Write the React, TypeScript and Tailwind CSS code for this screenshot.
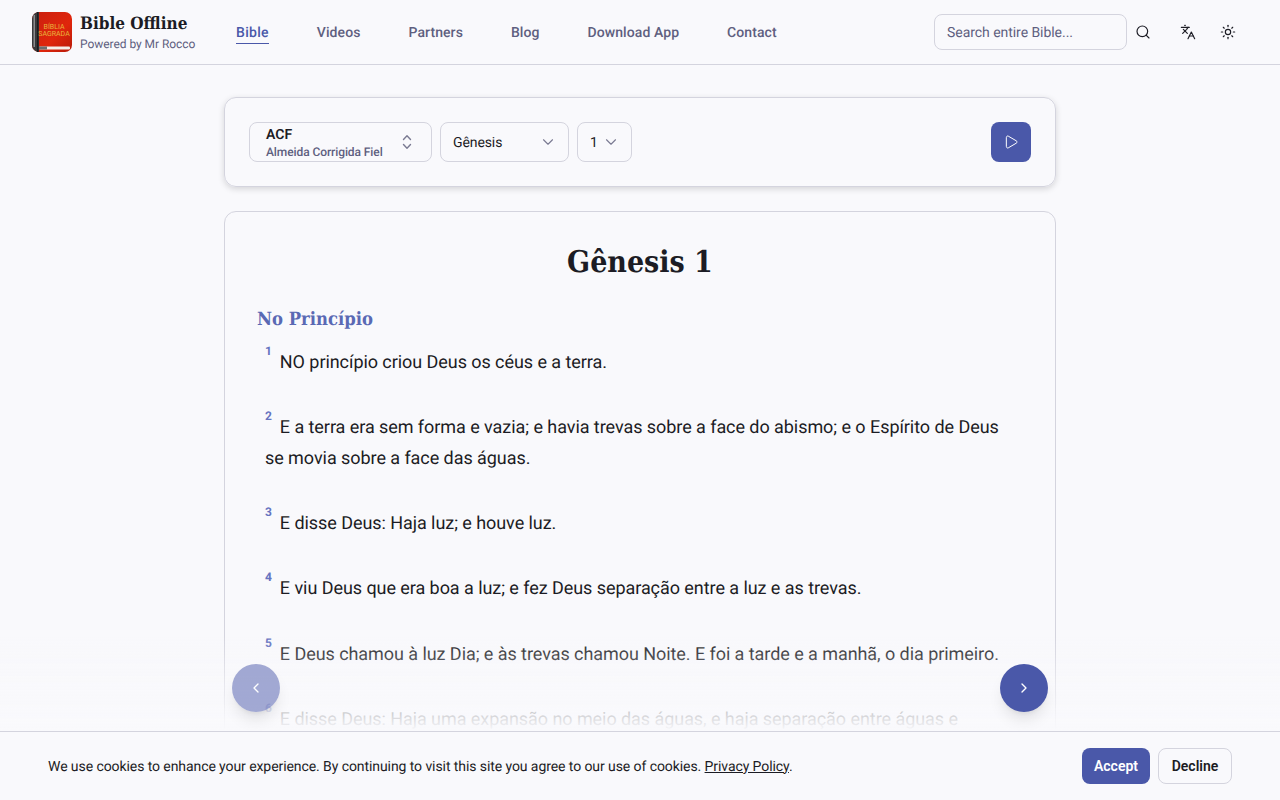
import { ChevronDown, ChevronLeft, ChevronRight, Languages, Play, Search, Sun } from 'lucide-react'

const navLinks = ['Videos', 'Partners', 'Blog', 'Download App', 'Contact']

const verses = [
  { n: 1, text: 'NO princípio criou Deus os céus e a terra.' },
  { n: 2, text: 'E a terra era sem forma e vazia; e havia trevas sobre a face do abismo; e o Espírito de Deus se movia sobre a face das águas.' },
  { n: 3, text: 'E disse Deus: Haja luz; e houve luz.' },
  { n: 4, text: 'E viu Deus que era boa a luz; e fez Deus separação entre a luz e as trevas.' },
  { n: 5, text: 'E Deus chamou à luz Dia; e às trevas chamou Noite. E foi a tarde e a manhã, o dia primeiro.' },
  { n: 6, text: 'E disse Deus: Haja uma expansão no meio das águas, e haja separação entre águas e águas.' },
]

function Logo() {
  return (
    <svg width="40" height="40" viewBox="0 0 40 40" className="shrink-0">
      <defs>
        <linearGradient id="cover" x1="0" y1="0" x2="1" y2="1">
          <stop offset="0" stopColor="#c9200f" />
          <stop offset="0.6" stopColor="#e0260c" />
          <stop offset="1" stopColor="#b81a08" />
        </linearGradient>
      </defs>
      <rect width="40" height="40" rx="7" fill="url(#cover)" />
      <path d="M0 7a7 7 0 0 1 7-7v40a7 7 0 0 1-7-7z" fill="#3a3a3c" />
      <rect x="1.5" y="3" width="1.5" height="32" fill="#8b8b8d" />
      <rect x="5" y="0" width="1.5" height="40" fill="#1d1d1f" />
      <rect x="7" y="34.5" width="31" height="3" rx="1" fill="#f4efe9" />
      <rect x="7" y="34.5" width="8" height="3" fill="#6d6d6d" />
      <text x="22" y="17" textAnchor="middle" fontSize="7" fill="#e9b43c" fontFamily="Roboto, sans-serif">BÍBLIA</text>
      <text x="22" y="23.5" textAnchor="middle" fontSize="7" fill="#e9b43c" fontFamily="Roboto, sans-serif">SAGRADA</text>
    </svg>
  )
}

function UpDownIcon() {
  return (
    <svg width="16" height="16" viewBox="0 0 16 16" fill="none" stroke="#7a7a92" strokeWidth="1.4" strokeLinecap="round" strokeLinejoin="round">
      <path d="M4.5 5.5 8 1.8 11.5 5.5M4.5 10.5 8 14.2 11.5 10.5" />
    </svg>
  )
}

export default function App() {
  return (
    <div className="h-screen overflow-hidden bg-[#f9f9fc] text-[#1c1c24] font-['Roboto',sans-serif] [text-rendering:geometricPrecision]">
      {/* Header */}
      <header className="h-[65px] border-b border-[#d4d4de] px-8 flex items-center">
        <div className="w-[164px] shrink-0 flex items-center gap-2">
          <Logo />
          <div>
            <div className="font-['DejaVu_Serif_Condensed','DejaVu_Serif',serif] font-bold text-[17px] leading-[22px]">Bible Offline</div>
            <div className="text-xs leading-4 text-[#5f5f80] tracking-[-0.05px] mt-px">Powered by Mr Rocco</div>
          </div>
        </div>

        <nav className="ml-10 flex items-center gap-12 text-sm font-medium text-[#5f5f80] tracking-[0.08px] pt-px">
          <a className="text-[#4a58a9] border-b border-[#4a58a9] leading-[20px] tracking-[0.3px] pt-px">Bible</a>
          {navLinks.map((link) => (
            <a key={link} className="leading-[20px]">{link}</a>
          ))}
        </nav>

        <div className="ml-auto flex items-center">
          <div className="w-[193px] h-9 rounded-lg border border-[#d4d4de] px-3 pt-px flex items-center text-sm text-[#5f5f80] tracking-[-0.05px]">
            Search entire Bible...
          </div>
          <Search className="w-4 h-4 ml-2" strokeWidth={1.75} />
          <Languages className="w-4 h-4 ml-[29px]" strokeWidth={1.75} />
          <Sun className="w-4 h-4 ml-6 mr-3" strokeWidth={1.75} />
        </div>
      </header>

      <main className="w-[832px] mx-auto pt-8">
        {/* Version selectors */}
        <div className="h-[90px] rounded-xl border border-[#d4d4de] shadow-[0_2px_6px_rgba(0,0,0,0.15)] px-6 flex items-center">
          <div className="w-[183px] h-10 rounded-lg border border-[#d4d4de] pl-4 pr-4 flex items-center justify-between">
            <div>
              <div className="text-sm font-semibold leading-[20px] pt-px">ACF</div>
              <div className="text-xs leading-[16px] font-medium text-[#5f5f80] tracking-[-0.09px] -mt-px">Almeida Corrigida Fiel</div>
            </div>
            <UpDownIcon />
          </div>
          <div className="ml-2 w-[129px] h-10 rounded-lg border border-[#d4d4de] pl-3 pr-[11px] flex items-center justify-between text-sm tracking-[-0.1px]">
            <span className="pt-px">Gênesis</span>
            <ChevronDown className="w-[18px] h-[18px] text-[#7a7a92]" strokeWidth={1.5} />
          </div>
          <div className="ml-2 w-[55px] h-10 rounded-lg border border-[#d4d4de] pl-3 pr-[11px] flex items-center justify-between text-sm">
            <span className="pt-px">1</span>
            <ChevronDown className="w-[18px] h-[18px] text-[#7a7a92]" strokeWidth={1.5} />
          </div>
          <button className="ml-auto w-10 h-10 rounded-lg bg-[#4a58a9] flex items-center justify-center text-white">
            <Play className="w-4 h-4" strokeWidth={1.5} />
          </button>
        </div>

        {/* Chapter */}
        <article className="mt-6 rounded-xl border border-[#d4d4de] p-8 pt-[27px]">
          <h1 className="font-['DejaVu_Serif_Condensed','DejaVu_Serif',serif] font-bold text-[30px] leading-[48px] text-center">Gênesis 1</h1>
          <h2 className="mt-[19px] font-['DejaVu_Serif_Condensed','DejaVu_Serif',serif] font-bold text-[18.3px] leading-[28px] text-[#5a69b4]">No Princípio</h2>
          <div className="mt-[14px] pl-2 pr-3">
            {verses.map((v) => (
              <p key={v.n} className="mb-[34.7px] text-[18px] leading-[30.6px] tracking-[-0.06px]">
                <sup className="text-xs font-bold text-[#6673c0] mr-2 top-[-13px]">{v.n}</sup>
                {v.text}
              </p>
            ))}
          </div>
        </article>
      </main>

      {/* Fade over the text */}
      <div className="fixed left-0 right-0 bottom-[69px] h-24 bg-gradient-to-t from-[#f9f9fc] to-transparent" />

      {/* Prev / next */}
      <button className="fixed left-[232px] top-[664px] w-12 h-12 rounded-full bg-[#4a58a9]/50 shadow-lg flex items-center justify-center text-white">
        <ChevronLeft className="w-4 h-4" />
      </button>
      <button className="fixed left-[1000px] top-[664px] w-12 h-12 rounded-full bg-[#4a58a9] shadow-lg flex items-center justify-center text-white">
        <ChevronRight className="w-4 h-4" />
      </button>

      {/* Cookie bar */}
      <div className="fixed left-0 right-0 bottom-0 h-[69px] border-t border-[#d4d4de] bg-[#f9f9fc] pl-12 pr-12 flex items-center justify-between">
        <p className="text-sm pt-px tracking-[-0.08px]">
          We use cookies to enhance your experience. By continuing to visit this site you agree to our use of cookies.{' '}
          <a className="underline">Privacy Policy</a>.
        </p>
        <div className="flex items-center gap-2">
          <button className="h-9 w-[68px] rounded-lg bg-[#4a58a9] text-white text-sm font-semibold">Accept</button>
          <button className="h-9 w-[74px] rounded-lg border border-[#d4d4de] text-sm font-semibold">Decline</button>
        </div>
      </div>
    </div>
  )
}
